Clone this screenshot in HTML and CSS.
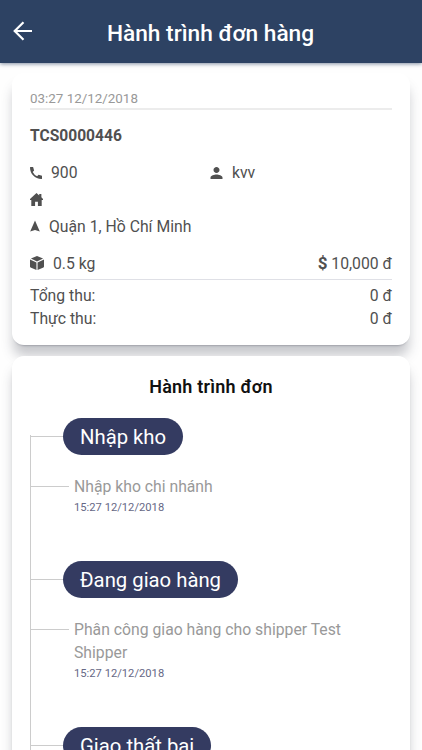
FILE: index.html
```html
<!DOCTYPE html>
<html lang="vi">
<head>
    <meta charset="UTF-8">
    <meta name="viewport" content="width=device-width, initial-scale=1.0">
    <title>Hành trình đơn hàng</title>
    <link rel="stylesheet" href="styles.css">
</head>
<body>
    <header class="header">
        <svg class="back" viewBox="0 0 20 20"><path d="M19 10H2M10.500 1.200L1.700 10l8.800 8.800"/></svg>
        <h1>Hành trình đơn hàng</h1>
    </header>
    <main class="content">
        <section class="card order">
            <div class="date">03:27 12/12/2018</div>
            <div class="code">TCS0000446</div>
            <div class="row contact">
                <div class="cell">
                    <svg class="icon phone" viewBox="0 0 12 12"><path d="M.4 0h2.700l1 3.400-1.400 1.500q1.600 3 4.400 4.400l1.500-1.500 3.400 1v2.700q0 .5-.6.500C5 12 0 7 0 .6Q0 0 .4 0z"/></svg>
                    <span>900</span>
                </div>
                <div class="cell">
                    <svg class="icon person" viewBox="4 4 16 16"><path d="M12 12c2.210 0 4-1.790 4-4s-1.790-4-4-4-4 1.790-4 4 1.790 4 4 4zm0 2c-2.670 0-8 1.340-8 4v2h16v-2c0-2.660-5.330-4-8-4z"/></svg>
                    <span>kvv</span>
                </div>
            </div>
            <div class="row address">
                <svg class="icon home" viewBox="0 0 12 12"><path d="M6 0l2.500 2.200V1h2v3L12 5.500v.9h-1.200V12H7.300V8H4.700v4H1.200V6.400H0v-.9z"/></svg>
            </div>
            <div class="row address">
                <svg class="icon nav" viewBox="0 0 11 12"><path d="M5.500 0L10.800 12 5.500 10.300.2 12z"/></svg>
                <span>Quận 1, Hồ Chí Minh</span>
            </div>
            <div class="row weight">
                <svg class="icon box" viewBox="0 0 15 15"><path d="M7.500 0L14 2.700 7.500 5.800 1 2.700zM0 3.800l6.900 3.200V15L.6 12.200Q0 11.900 0 11.200zM15 3.800L8.100 7v8l6.300-2.800q.6-.3.6-1z"/></svg>
                <span>0.5 kg</span>
                <span class="price"><b>$</b> 10,000 đ</span>
            </div>
            <div class="totals">
                <div class="total"><span>Tổng thu:</span><span>0 đ</span></div>
                <div class="total"><span>Thực thu:</span><span>0 đ</span></div>
            </div>
        </section>

        <section class="card journey">
            <h2>Hành trình đơn</h2>
            <div class="timeline">
                <div class="stage">
                    <div class="status"><span class="badge">Nhập kho</span></div>
                    <div class="event">
                        <p>Nhập kho chi nhánh</p>
                        <time>15:27 12/12/2018</time>
                    </div>
                </div>
                <div class="stage">
                    <div class="status"><span class="badge">Đang giao hàng</span></div>
                    <div class="event">
                        <p>Phân công giao hàng cho shipper Test Shipper</p>
                        <time>15:27 12/12/2018</time>
                    </div>
                </div>
                <div class="stage">
                    <div class="status"><span class="badge">Giao thất bại</span></div>
                </div>
            </div>
        </section>
    </main>
</body>
</html>
```
FILE: styles.css
```css
* {
    box-sizing: border-box;
}
body {
    margin: 0;
    height: 100vh;
    overflow: hidden;
    display: flex;
    flex-direction: column;
    background: #fefefe;
    color: #505050;
    font-family: Roboto, sans-serif;
    font-size: 15.750px;
}
h1, h2, p {
    margin: 0;
}

/* Top bar */
.header {
    flex: none;
    height: 63px;
    padding: 4px 14px 0 13px;
    display: grid;
    grid-template-columns: 20px 1fr 20px;
    align-items: center;
    background: #2d4263;
    box-shadow: 0 1px 4px rgba(45, 66, 99, 0.6);
}
.header h1 {
    color: #fff;
    font-size: 22.700px;
    font-weight: 500;
    line-height: 26px;
    text-align: center;
}
.back {
    width: 20px;
    height: 20px;
    margin-top: -5px;
    fill: none;
    stroke: #fff;
    stroke-width: 2.2;
}

.content {
    flex: 1;
    min-height: 0;
    overflow: hidden;
    margin-top: 5px;
    padding: 5px 12px 0;
}
.card {
    background: #fff;
    border-radius: 12px;
    box-shadow: 0 12px 12px -1px rgba(60, 64, 80, 0.28), 0 2px 3px -1px rgba(60, 64, 80, 0.15);
}

/* Order info */
.order {
    height: 272px;
    padding: 17px 18px 0;
    box-shadow: 0 12px 12px -1px rgba(60, 64, 80, 0.28), 0 3px 2px -2px rgba(60, 64, 80, 0.3);
}
.date {
    height: 20px;
    border-bottom: 2px solid #ececec;
    color: #999;
    font-size: 13.400px;
    line-height: 18px;
}
.code {
    margin-top: 14px;
    font-size: 15.600px;
    font-weight: 700;
    line-height: 24px;
}
.row {
    display: flex;
    align-items: center;
    height: 27px;
}
.contact {
    margin-top: 11px;
}
.cell {
    flex: 1;
    display: flex;
    align-items: center;
    gap: 9px;
}
.cell + .cell {
    margin-left: -2px;
}
.icon {
    fill: #505050;
}
.phone {
    width: 12px;
    height: 12px;
}
.person {
    width: 13px;
    height: 12px;
}
.home {
    width: 13px;
    height: 13px;
    margin-top: -1px;
}
.nav {
    width: 10px;
    height: 12px;
    margin-top: -1px;
}
.address {
    gap: 9px;
}
.weight {
    height: 34px;
    margin-top: 6px;
    padding-top: 1px;
    gap: 9px;
    border-bottom: 1px solid #dfe0e6;
}
.box {
    width: 14px;
    height: 14px;
    margin-top: -1px;
}
.price {
    margin-left: auto;
}
.price b {
    font-size: 17px;
}
.totals {
    padding-top: 4px;
}
.total {
    display: flex;
    justify-content: space-between;
    line-height: 23px;
}

/* Order journey */
.journey {
    height: 600px;
    margin-top: 11px;
    padding: 18px 18px 0;
}
.journey h2 {
    color: #111;
    font-size: 18px;
    font-weight: 600;
    letter-spacing: 0.2px;
    line-height: 25px;
    text-align: center;
}
.timeline {
    padding-top: 19px;
}
.stage {
    border-left: 1px solid #ccc;
}
.stage:first-child {
    border-image: linear-gradient(transparent 18px, #ccc 18px) 1;
    border-image-width: 0 0 0 1px;
}
.status {
    display: flex;
    align-items: center;
    height: 37px;
}
.status::before {
    content: "";
    width: 32px;
    height: 1px;
    background: #ccc;
}
.badge {
    padding: 1px 17px 0;
    border-radius: 19px;
    background: #343b61;
    color: #fff;
    font-size: 20.300px;
    line-height: 36px;
}
.event {
    display: grid;
    grid-template-columns: 38px 1fr;
    column-gap: 5px;
    padding: 20px 40px 45px 0;
}
.event::before {
    content: "";
    height: 1px;
    margin-top: 11px;
    background: #ccc;
}
.event p {
    color: #999;
    line-height: 23.500px;
}
.event time {
    grid-column: 2;
    color: #666885;
    font-size: 11.200px;
    line-height: 17px;
}
```
